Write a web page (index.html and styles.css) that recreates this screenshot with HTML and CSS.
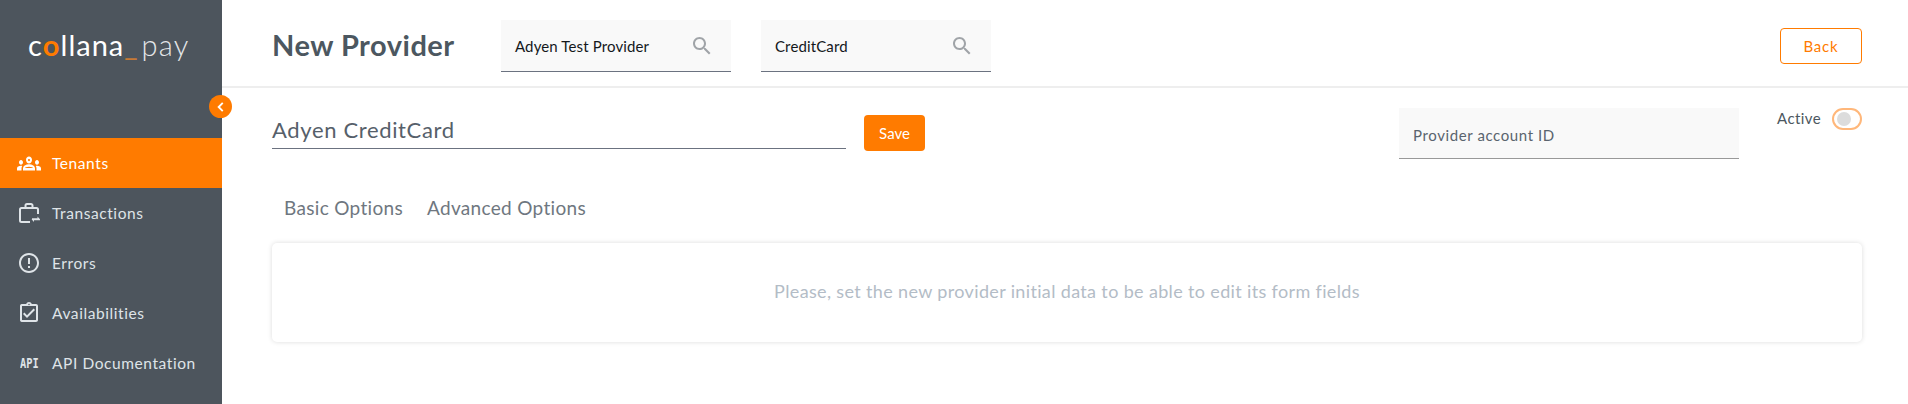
FILE: index.html
```html
<!DOCTYPE html>
<html lang="en">
<head>
<meta charset="UTF-8">
<meta name="viewport" content="width=device-width, initial-scale=1.0">
<title>New Provider</title>
<link rel="stylesheet" href="styles.css">
</head>
<body>

<aside class="sidebar">
  <div class="logo"><span class="logo-name">c<b>o</b>llana</span><span class="logo-line">_</span><span class="logo-pay">pay</span></div>
  <button class="collapse">
    <svg viewBox="0 0 12 12" width="14" height="14"><path d="M7.500 2.500 4 6l3.500 3.500" fill="none" stroke="#fff" stroke-width="1.600"/></svg>
  </button>
  <nav class="nav">
    <a class="nav-item active">
      <svg class="nav-icon" viewBox="0 5.500 24 13" preserveAspectRatio="none"><path d="M4 13c1.100 0 2-.9 2-2s-.9-2-2-2-2 .9-2 2 .9 2 2 2zm1.130 1.100C4.760 14.040 4.390 14 4 14c-.99 0-1.930.21-2.780.58C.48 14.900 0 15.620 0 16.430V18h4.500v-1.610c0-.83.23-1.610.63-2.290zM20 13c1.100 0 2-.9 2-2s-.9-2-2-2-2 .9-2 2 .9 2 2 2zm4 3.430c0-.81-.48-1.530-1.220-1.850C21.930 14.210 20.990 14 20 14c-.39 0-.76.04-1.130.1.4.68.63 1.460.63 2.290V18H24v-1.570zm-7.760-2.780C15.070 13.140 13.630 12.750 12 12.750c-1.630 0-3.070.4-4.240.91C6.680 14.130 6 15.210 6 16.390V18h12v-1.610c0-1.180-.68-2.260-1.760-2.740zM8.070 16c.09-.23.13-.39.91-.69.97-.38 1.990-.56 3.020-.56s2.050.18 3.020.56c.77.3.81.46.91.69H8.070zM12 8c.55 0 1 .45 1 1s-.45 1-1 1-1-.45-1-1 .45-1 1-1m0-2c-1.660 0-3 1.340-3 3s1.340 3 3 3 3-1.340 3-3-1.340-3-3-3z"/></svg>
      Tenants
    </a>
    <a class="nav-item">
      <svg class="nav-icon" viewBox="0 0 24 24"><path class="icon-line" d="M13 21H4.500A1.500 1.500 0 0 1 3 19.500V8.500A1.500 1.500 0 0 1 4.500 7h15A1.500 1.500 0 0 1 21 8.500V13M8.500 7V4.500A1.500 1.500 0 0 1 10 3h4a1.500 1.500 0 0 1 1.500 1.500V7"/><path d="M15 17.200h5.500v-1.700l2.500 2.700h-8zM23 19.200h-6v1.700l-2.500-2.700h8.500z"/></svg>
      Transactions
    </a>
    <a class="nav-item">
      <svg class="nav-icon" viewBox="0 0 24 24"><path d="M11 15h2v2h-2zm0-8h2v6h-2zm.99-5C6.470 2 2 6.480 2 12s4.470 10 9.990 10C17.520 22 22 17.520 22 12S17.520 2 11.990 2zM12 20c-4.420 0-8-3.580-8-8s3.580-8 8-8 8 3.580 8 8-3.580 8-8 8z"/></svg>
      Errors
    </a>
    <a class="nav-item">
      <svg class="nav-icon" viewBox="0 0 24 24"><path d="M18 9l-1.410-1.420L10 14.170l-2.590-2.580L6 13l4 4zm1-6h-4.180C14.400 1.840 13.300 1 12 1c-1.300 0-2.400.84-2.820 2H5c-.14 0-.27.01-.4.04-.39.08-.74.28-1.010.55-.18.18-.33.4-.43.64-.1.23-.16.49-.16.77v14c0 .27.06.54.16.78s.25.45.43.64c.27.27.62.47 1.010.55.13.02.26.03.4.03h14c1.100 0 2-.9 2-2V5c0-1.100-.9-2-2-2zm-7-.25c.41 0 .75.34.75.75s-.34.75-.75.75-.75-.34-.75-.75.34-.75.75-.75zM19 19H5V5h14v14z"/></svg>
      Availabilities
    </a>
    <a class="nav-item">
      <span class="api-icon">API</span>
      API Documentation
    </a>
  </nav>
</aside>

<main class="main">
  <header class="topbar">
    <h1 class="page-title">New Provider</h1>
    <div class="search-box">
      <span>Adyen Test Provider</span>
      <svg class="search-icon" viewBox="0 0 24 24"><path d="M15.500 14h-.79l-.28-.27C15.410 12.590 16 11.110 16 9.500 16 5.910 13.090 3 9.500 3S3 5.910 3 9.500 5.910 16 9.500 16c1.610 0 3.090-.59 4.230-1.570l.27.28v.79l5 4.990L20.490 19l-4.990-5zm-6 0C7.010 14 5 11.990 5 9.500S7.010 5 9.500 5 14 7.010 14 9.500 11.990 14 9.500 14z"/></svg>
    </div>
    <div class="search-box">
      <span>CreditCard</span>
      <svg class="search-icon" viewBox="0 0 24 24"><path d="M15.500 14h-.79l-.28-.27C15.410 12.590 16 11.110 16 9.500 16 5.910 13.090 3 9.500 3S3 5.910 3 9.500 5.910 16 9.500 16c1.610 0 3.090-.59 4.230-1.570l.27.28v.79l5 4.990L20.490 19l-4.990-5zm-6 0C7.010 14 5 11.990 5 9.500S7.010 5 9.500 5 14 7.010 14 9.500 11.990 14 9.500 14z"/></svg>
    </div>
    <button class="btn-back">Back</button>
  </header>

  <section class="content">
    <div class="form-row">
      <div class="name-field">Adyen CreditCard</div>
      <button class="btn-save">Save</button>
      <div class="account-field">Provider account ID</div>
      <div class="active-field">
        <span class="active-label">Active</span>
        <span class="toggle"><span class="toggle-knob"></span></span>
      </div>
    </div>

    <div class="tabs">
      <a class="tab">Basic Options</a>
      <a class="tab">Advanced Options</a>
    </div>

    <div class="card"><span class="card-text">Please, set the new provider initial data to be able to edit its form fields</span></div>
  </section>
</main>

</body>
</html>
```

FILE: styles.css
```css
* {
  box-sizing: border-box;
}

body {
  margin: 0;
  height: 404px;
  display: flex;
  font-family: 'Lato', sans-serif;
  color: #4c5760;
  background-color: #fff;
  overflow: hidden;
}

/* Sidebar */
.sidebar {
  position: relative;
  width: 222px;
  flex-shrink: 0;
  background-color: #4d555d;
}

.logo {
  display: flex;
  align-items: baseline;
  padding: 27px 0 0 28px;
  height: 138px;
  font-size: 29px;
  line-height: 36px;
  letter-spacing: 1px;
  color: #fff;
}

.logo-name {
  font-weight: 400;
}

.logo-name b {
  font-weight: 700;
  color: #ff7b00;
}

.logo-line {
  color: #c77a36;
  font-weight: 400;
}

.logo-pay {
  font-weight: 300;
  margin-left: 3px;
  letter-spacing: 1.2px;
  color: #e4e6e8;
}

.collapse {
  position: absolute;
  top: 95px;
  left: 209px;
  width: 23px;
  height: 23px;
  padding: 0;
  border: 0;
  border-radius: 50%;
  background-color: #ff7b00;
  display: flex;
  align-items: center;
  justify-content: center;
}

.nav-item {
  display: flex;
  align-items: center;
  gap: 11px;
  height: 50px;
  padding-left: 17px;
  font-size: 15.5px;
  letter-spacing: 0.58px;
  color: #dfe4e8;
}

.nav-item.active {
  background-color: #ff7b00;
  color: #fff;
}

.nav-icon {
  width: 24px;
  height: 24px;
  fill: currentColor;
}

.active .nav-icon {
  height: 15px;
}

.icon-line {
  fill: none;
  stroke: currentColor;
  stroke-width: 2;
}

.api-icon {
  width: 24px;
  text-align: center;
  font-family: 'DejaVu Sans Mono', monospace;
  font-size: 14px;
  font-weight: 700;
  letter-spacing: 0;
  transform: scaleX(0.74);
}

/* Top bar */
.main {
  flex: 1;
}

.topbar {
  display: flex;
  align-items: center;
  height: 88px;
  padding: 0 46px 0 50px;
  border-bottom: 2px solid #eee;
}

.page-title {
  width: 229px;
  margin: 2px 0 0;
  font-size: 29px;
  font-weight: 700;
  letter-spacing: 0.5px;
  color: #4c5760;
}

.search-box {
  display: flex;
  align-items: center;
  justify-content: space-between;
  width: 230px;
  height: 52px;
  margin: 6px 30px 0 0;
  padding: 0 17px 0 14px;
  background-color: #f9f9f9;
  border-bottom: 1px solid #6b7280;
  font-size: 15px;
  letter-spacing: 0.13px;
  color: #14181c;
}

.search-icon {
  width: 24px;
  height: 24px;
  fill: #a0a4a8;
}

.btn-back {
  width: 82px;
  height: 36px;
  margin: 6px 0 0 auto;
  background-color: #fff;
  border: 1px solid #ff7b00;
  border-radius: 4px;
  color: #ff7b00;
  font-family: inherit;
  font-size: 15px;
  letter-spacing: 0.8px;
}

/* Form */
.content {
  padding: 20px 46px 0 50px;
}

.form-row {
  display: flex;
  align-items: flex-start;
}

.name-field {
  width: 574px;
  height: 41px;
  margin-right: 18px;
  padding-top: 7px;
  border-bottom: 1px solid #6b7280;
  font-size: 22px;
  font-weight: 400;
  letter-spacing: 0.65px;
  line-height: 30px;
  color: #56606a;
}

.btn-save {
  width: 61px;
  height: 36px;
  margin-top: 7px;
  background-color: #ff7b00;
  border: 0;
  border-radius: 4px;
  color: #fff;
  font-family: inherit;
  font-size: 15px;
}

.account-field {
  width: 340px;
  height: 51px;
  margin-left: auto;
  padding: 17px 0 0 14px;
  background-color: #f9f9f9;
  border-bottom: 1px solid #999;
  font-size: 15px;
  line-height: 20px;
  letter-spacing: 0.6px;
  color: #5a646e;
}

.active-field {
  display: flex;
  align-items: center;
  gap: 11px;
  margin-left: 38px;
  font-size: 15px;
  line-height: 22px;
  letter-spacing: 0.4px;
}

.active-label {
  margin-top: -3px;
}

.toggle {
  display: flex;
  align-items: center;
  width: 30px;
  height: 22px;
  padding-left: 4px;
  border: 2px solid #ffb77a;
  border-radius: 11px;
  background-color: #fff;
}

.toggle-knob {
  width: 14px;
  height: 14px;
  margin-left: -1px;
  border-radius: 50%;
  background-color: #dcdcdc;
}

/* Tabs */
.tabs {
  display: flex;
  gap: 24px;
  padding: 0 0 0 12px;
  margin-top: 34px;
  height: 50px;
}

.tab {
  font-size: 19px;
  line-height: 30px;
  letter-spacing: 0.32px;
  color: #6f7780;
}

.card {
  display: flex;
  align-items: center;
  justify-content: center;
  height: 99px;
  border-radius: 5px;
  background-color: #fff;
  box-shadow: 0 0 5px rgba(0, 0, 0, 0.14);
  font-size: 18px;
  letter-spacing: 0.35px;
  color: #b3bcc6;
}

.card-text {
  margin-top: -4px;
}
```
